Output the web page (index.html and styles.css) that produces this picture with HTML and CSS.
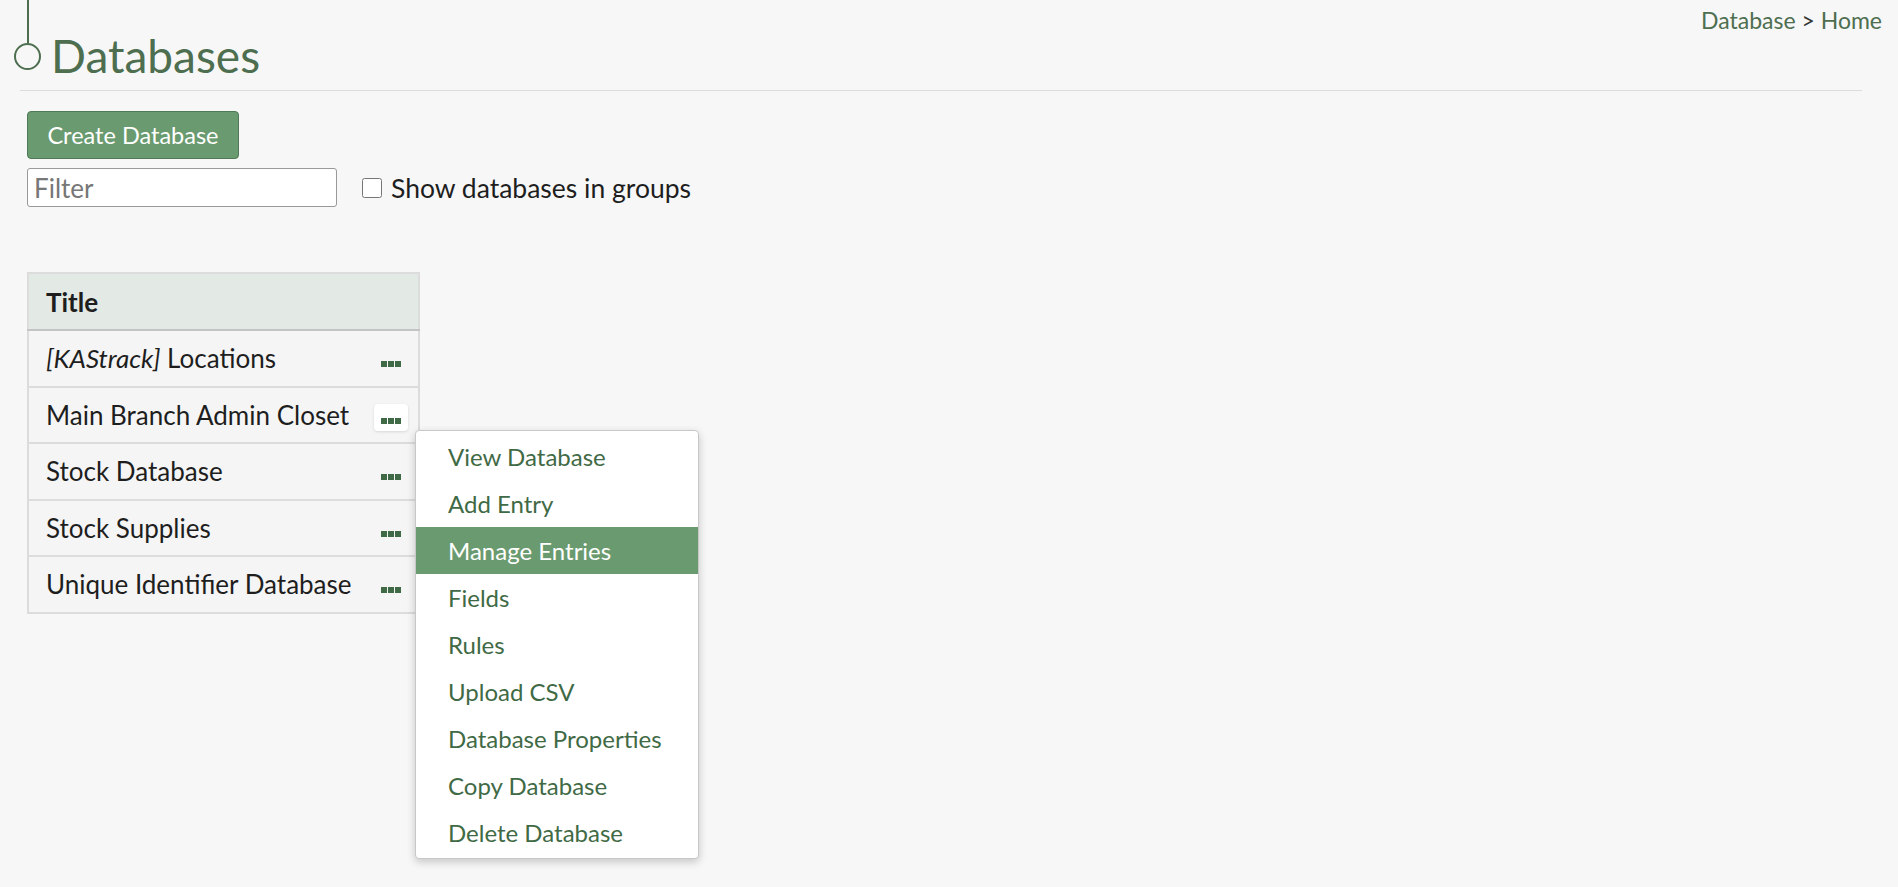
FILE: index.html
```html
<!DOCTYPE html>
<html lang="en">
<head>
  <meta charset="UTF-8" />
  <title>Databases</title>
  <link rel="stylesheet" href="styles.css">
</head>
<body>
  <header class="top">
    <div class="title">
      <div class="marker">
        <span class="marker-line"></span>
        <span class="marker-dot"></span>
      </div>
      <h1>Databases</h1>
    </div>
    <nav class="crumbs">
      <a href="#">Database</a> <span class="sep">&gt;</span>&nbsp;<a href="#">Home</a>
    </nav>
  </header>
  <hr class="rule" />

  <main class="content">
    <button class="btn-create">Create Database</button>

    <div class="filters">
      <input type="text" class="filter" placeholder="Filter" />
      <label class="groups">
        <input type="checkbox" />
        <span>Show databases in groups</span>
      </label>
    </div>

    <div class="table-wrap">
      <table class="db-table">
        <thead>
          <tr><th colspan="2">Title</th></tr>
        </thead>
        <tbody>
          <tr>
            <td class="name"><em>[KAStrack]</em> Locations</td>
            <td class="act"><button class="dots"><svg width="20" height="7" viewBox="0 0 20 7"><rect x="0" y="0" width="6" height="6"/><rect x="7" y="0" width="6" height="6"/><rect x="14" y="0" width="6" height="6"/></svg></button></td>
          </tr>
          <tr>
            <td class="name">Main Branch Admin Closet</td>
            <td class="act"><button class="dots open"><svg width="20" height="7" viewBox="0 0 20 7"><rect x="0" y="0" width="6" height="6"/><rect x="7" y="0" width="6" height="6"/><rect x="14" y="0" width="6" height="6"/></svg></button></td>
          </tr>
          <tr>
            <td class="name">Stock Database</td>
            <td class="act"><button class="dots"><svg width="20" height="7" viewBox="0 0 20 7"><rect x="0" y="0" width="6" height="6"/><rect x="7" y="0" width="6" height="6"/><rect x="14" y="0" width="6" height="6"/></svg></button></td>
          </tr>
          <tr>
            <td class="name">Stock Supplies</td>
            <td class="act"><button class="dots"><svg width="20" height="7" viewBox="0 0 20 7"><rect x="0" y="0" width="6" height="6"/><rect x="7" y="0" width="6" height="6"/><rect x="14" y="0" width="6" height="6"/></svg></button></td>
          </tr>
          <tr>
            <td class="name">Unique Identifier Database</td>
            <td class="act"><button class="dots"><svg width="20" height="7" viewBox="0 0 20 7"><rect x="0" y="0" width="6" height="6"/><rect x="7" y="0" width="6" height="6"/><rect x="14" y="0" width="6" height="6"/></svg></button></td>
          </tr>
        </tbody>
      </table>

      <!-- dropdown for "Main Branch Admin Closet" -->
      <ul class="menu">
        <li><a href="#">View Database</a></li>
        <li><a href="#">Add Entry</a></li>
        <li class="active"><a href="#">Manage Entries</a></li>
        <li><a href="#">Fields</a></li>
        <li><a href="#">Rules</a></li>
        <li><a href="#">Upload CSV</a></li>
        <li><a href="#">Database Properties</a></li>
        <li><a href="#">Copy Database</a></li>
        <li><a href="#">Delete Database</a></li>
      </ul>
    </div>
  </main>
</body>
</html>
```

FILE: styles.css
```css
:root {
  --green: #4e6e50;
  --green-btn: #6a9a6f;
  --green-text: #3f6a45;
  --bg: #f7f7f7;
}
html {
  background: var(--bg);
}
body {
  margin: 0;
  min-height: 100vh;
  background: var(--bg);
  font-family: Lato, "Open Sans", sans-serif;
  color: #1e1e1e;
}
.top {
  display: flex;
  justify-content: space-between;
  align-items: flex-start;
  padding: 0 16px 0 14px;
}
.title {
  display: flex;
  align-items: flex-end;
  gap: 10px;
}
.marker {
  display: flex;
  flex-direction: column;
  align-items: center;
  width: 27px;
}
.marker-line {
  width: 2px;
  height: 43px;
  background: var(--green);
}
.marker-dot {
  width: 23px;
  height: 23px;
  border: 2px solid var(--green);
  border-radius: 50%;
}
h1 {
  margin: 0 0 -9px;
  font-size: 46px;
  font-weight: 400;
  line-height: 1;
  color: var(--green);
}
.crumbs {
  margin-top: 6px;
  font-size: 23px;
}
.crumbs a {
  color: var(--green);
  text-decoration: none;
}
.crumbs .sep {
  color: #333;
}
.rule {
  margin: 20px 36px 0 20px;
  border: none;
  border-top: 1px solid #dcdcdc;
}
.content {
  padding: 20px 0 280px 27px;
}
.btn-create {
  display: block;
  width: 212px;
  height: 48px;
  background: var(--green-btn);
  color: #fff;
  border: 1px solid #4f7a55;
  border-radius: 4px;
  font-family: inherit;
  font-size: 23.5px;
}
.filters {
  display: flex;
  align-items: center;
  gap: 25px;
  margin-top: 9px;
}
.filter {
  width: 310px;
  height: 39px;
  box-sizing: border-box;
  border: 1px solid #999;
  border-radius: 3px;
  padding: 0 6px;
  font-family: inherit;
  font-size: 26px;
  background: #fff;
}
.filter::placeholder {
  color: #777;
}
.groups {
  display: flex;
  align-items: center;
  gap: 9px;
  font-size: 26.5px;
}
.groups input {
  width: 20px;
  height: 20px;
  margin: 0;
}
.table-wrap {
  position: relative;
  margin-top: 65px;
}
.db-table {
  width: 393px;
  border-collapse: collapse;
  border: 2px solid #dcdcdc;
  background: #f5f5f5;
}
.db-table th {
  height: 55px;
  padding: 0 17px;
  text-align: left;
  font-size: 26px;
  font-weight: 700;
  background: #e3e9e4;
  border-bottom: 2px solid #c4c4c4;
}
.db-table td {
  height: 54.5px;
  border-bottom: 2px solid #dcdcdc;
  font-size: 26px;
}
.name {
  padding: 0 0 0 17px;
  white-space: nowrap;
}
.act {
  width: 44px;
  padding: 0 10px 0 0;
  text-align: right;
}
.dots {
  width: 34px;
  height: 27px;
  padding: 6px 0 0;
  border: none;
  border-radius: 4px;
  background: transparent;
  fill: var(--green-text);
}
.dots.open {
  background: #fff;
  box-shadow: 0 1px 3px rgba(0, 0, 0, 0.12);
}
.menu {
  position: absolute;
  left: 388px;
  top: 158px;
  z-index: 10;
  width: 282px;
  margin: 0;
  padding: 2px 0;
  list-style: none;
  background: #fff;
  border: 1px solid #c8c8c8;
  border-radius: 4px;
  box-shadow: 0 3px 8px rgba(0, 0, 0, 0.2);
}
.menu li a {
  display: block;
  height: 47px;
  line-height: 47px;
  padding-left: 32px;
  font-size: 24px;
  color: var(--green-text);
  text-decoration: none;
}
.menu li.active a {
  background: var(--green-btn);
  color: #fff;
}
```
